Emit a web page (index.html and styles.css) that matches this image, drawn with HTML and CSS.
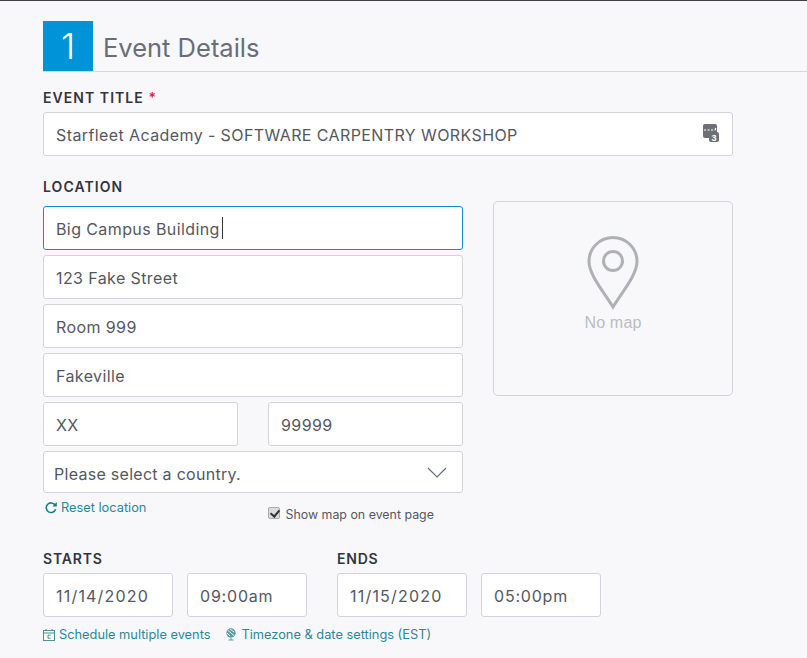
FILE: index.html
```html
<!DOCTYPE html>
<html lang="en">
<head>
<meta charset="utf-8">
<title>Event Details</title>
<link rel="stylesheet" href="styles.css">
</head>
<body>
<main class="page">
  <header class="section-head">
    <span class="step">1</span>
    <h1 class="section-title">Event Details</h1>
  </header>
  <div class="form">
    <div class="field-title">
      <label class="label" for="title">EVENT TITLE <span class="req">*</span></label>
      <div class="title-wrap">
        <input class="input" id="title" value="Starfleet Academy - SOFTWARE CARPENTRY WORKSHOP">
        <svg class="title-icon" width="18" height="19" viewBox="0 0 18 19"><rect x="0" y="0" width="14" height="14" rx="2" fill="#6f7074"/><rect x="6" y="8" width="10" height="10" rx="2" fill="#6f7074"/><path d="M1 6h2M4.500 6h2M8 6h2M11.500 6h1M12.500 4v2" stroke="#fff" stroke-width="1.200" fill="none"/><text x="11" y="16.500" class="title-icon-num">3</text></svg>
      </div>
    </div>
    <div class="label label-location">LOCATION</div>
    <div class="location">
      <div class="address">
        <div class="focus-wrap">
          <input class="input input-focus" value="Big Campus Building">
          <span class="caret"></span>
        </div>
        <input class="input" value="123 Fake Street">
        <input class="input" value="Room 999">
        <input class="input" value="Fakeville">
        <div class="state-row">
          <input class="input" value="XX">
          <input class="input" value="99999">
        </div>
        <div class="select">
          <span>Please select a country.</span>
          <svg width="20" height="11" viewBox="0 0 20 11"><path d="M1 1l9 9 9-9" fill="none" stroke="#5f6a80" stroke-width="1.200"/></svg>
        </div>
        <div class="address-foot">
          <a class="link" href="#">
            <svg class="reset-icon" width="12" height="13" viewBox="0 0 12 13"><path d="M10 4A4.800 4.800 0 1 0 10.600 8.200" fill="none" stroke="#167f88" stroke-width="1.600"/><path d="M11.800 1v4.400H7.400z" fill="#167f88"/></svg>Reset location
          </a>
          <label class="show-map"><input class="check" type="checkbox" checked>Show map on event page</label>
        </div>
      </div>
      <div class="map">
        <svg width="52" height="74" viewBox="0 0 52 74"><path d="M26 71C17 56 2 39 2 25.500a24 24 0 0 1 48 0C50 39 35 56 26 71z" fill="none" stroke="#afb1b6" stroke-width="3"/><circle cx="26" cy="25" r="9.500" fill="none" stroke="#afb1b6" stroke-width="3"/></svg>
        <span class="map-text">No map</span>
      </div>
    </div>
    <div class="dates">
      <div class="date-group">
        <div class="label label-date">STARTS</div>
        <div class="date-row">
          <input class="input input-date" value="11/14/2020">
          <input class="input input-time" value="09:00am">
        </div>
      </div>
      <div class="date-group">
        <div class="label label-date">ENDS</div>
        <div class="date-row">
          <input class="input input-date" value="11/15/2020">
          <input class="input input-time" value="05:00pm">
        </div>
      </div>
    </div>
    <div class="date-links">
      <a class="link" href="#">
        <svg width="12" height="12" viewBox="0 0 12 12"><rect x="0.500" y="1.500" width="11" height="10" fill="none" stroke="#4e8f98"/><path d="M0.500 4h11M3 0v2M9 0v2" stroke="#4e8f98" fill="none"/><path d="M7.500 6.200H5v3h2.500" stroke="#4e8f98" fill="none"/></svg>Schedule multiple events
      </a>
      <a class="link" href="#">
        <svg width="12" height="13" viewBox="0 0 12 13"><circle cx="6" cy="5" r="4.700" fill="#5a9ea6"/><path d="M2.500 2l7 6M5 1l4 3M2 5l3 3" stroke="#e4f0f1" fill="none"/><path d="M6 10v2M3.500 12h5" stroke="#5a9ea6" fill="none"/></svg>Timezone &amp; date settings (EST)
      </a>
    </div>
  </div>
</main>
</body>
</html>
```
FILE: styles.css
```css
* { box-sizing: border-box; }
html, body { margin: 0; height: 100%; }
body {
  background: #f8f8fb;
  border-top: 1px solid #3f4045;
  font-family: Inter, "Noto Sans", sans-serif;
  color: #55575f;
  overflow: hidden;
}
.page { padding: 20px 0 0 43px; }
.section-head {
  display: flex;
  align-items: stretch;
  height: 51px;
  border-bottom: 1px solid #d6d7de;
}
.step {
  width: 50px;
  height: 50px;
  background: #0093d7;
  color: #fff;
  font-size: 36px;
  font-weight: 300;
  line-height: 50px;
  text-align: center;
}
.section-title {
  margin: 0 0 0 10px;
  font-size: 25.500px;
  font-weight: 400;
  line-height: 54px;
  color: #6a6d78;
}
.form { width: 690px; }
.label {
  display: block;
  font-size: 14px;
  font-weight: 600;
  letter-spacing: 1.050px;
  line-height: 17px;
  color: #33343c;
}
.label-date { letter-spacing: 0.8px; }
.req { color: #e0204f; }
.field-title { padding-top: 17px; }
.title-wrap { position: relative; margin-top: 6px; }
.title-icon { position: absolute; right: 12px; top: 12px; }
.title-icon-num { font: 700 9px "Liberation Sans", sans-serif; fill: #fff; text-anchor: middle; }
.input {
  display: block;
  width: 100%;
  height: 44px;
  padding: 1px 12px 0;
  background: #fff;
  border: 1px solid #d2d4dd;
  border-radius: 3px;
  font-family: Inter, sans-serif;
  font-size: 16px;
  letter-spacing: 0.4px;
  color: #55575f;
  outline: none;
}
.input-focus { border-color: #0a8fd1; }
.focus-wrap { position: relative; }
.caret {
  position: absolute;
  left: 179px;
  top: 11px;
  width: 1px;
  height: 22px;
  background: #333;
}
.label-location { margin-top: 22px; }
.location {
  display: flex;
  gap: 30px;
  margin-top: 6px;
}
.address {
  width: 420px;
  padding-top: 5px;
  display: flex;
  flex-direction: column;
  gap: 5px;
}
.state-row {
  display: grid;
  grid-template-columns: 195px 195px;
  gap: 30px;
}
.select {
  height: 42px;
  padding: 3px 15px 0 10px;
  display: flex;
  align-items: center;
  justify-content: space-between;
  background: #fff;
  border: 1px solid #d2d4dd;
  border-radius: 3px;
  font-size: 16px;
  letter-spacing: 0.28px;
}
.select svg { margin-top: -3px; }
.address-foot {
  display: flex;
  align-items: flex-start;
  height: 30px;
  margin-top: 1px;
}
.link {
  display: inline-flex;
  align-items: center;
  gap: 4px;
  color: #2a8799;
  font-size: 12.800px;
  line-height: 17px;
  text-decoration: none;
}
.reset-icon { margin-left: 2px; }
.show-map {
  display: flex;
  align-items: center;
  margin-left: 122px;
  margin-top: 7px;
  font-size: 12.400px;
  line-height: 17px;
  color: #55575f;
}
.check {
  appearance: none;
  position: relative;
  width: 12px;
  height: 12px;
  margin: -3px 5px 0 0;
  background: #dcdcdf;
  border: 1px solid #a9abb0;
  border-radius: 2px;
}
.check::after {
  content: "";
  position: absolute;
  left: 3px;
  top: 0;
  width: 4px;
  height: 7px;
  border: solid #333;
  border-width: 0 2px 2px 0;
  transform: rotate(40deg);
}
.map {
  width: 240px;
  height: 195px;
  border: 1px solid #d2d4dd;
  border-radius: 5px;
  display: flex;
  flex-direction: column;
  align-items: center;
  padding-top: 34px;
}
.map-text {
  font-family: "Liberation Sans", sans-serif;
  font-size: 16px;
  letter-spacing: 0.2px;
  line-height: 18px;
  margin-top: 4px;
  color: #b9bcc6;
}
.dates {
  display: flex;
  gap: 30px;
  margin-top: 21px;
}
.date-row {
  display: flex;
  gap: 14px;
  margin-top: 6px;
}
.input-date { width: 130px; letter-spacing: 1.200px; }
.input-time { width: 120px; letter-spacing: 0.800px; }
.date-links {
  display: flex;
  gap: 15px;
  margin-top: 9px;
}
```
